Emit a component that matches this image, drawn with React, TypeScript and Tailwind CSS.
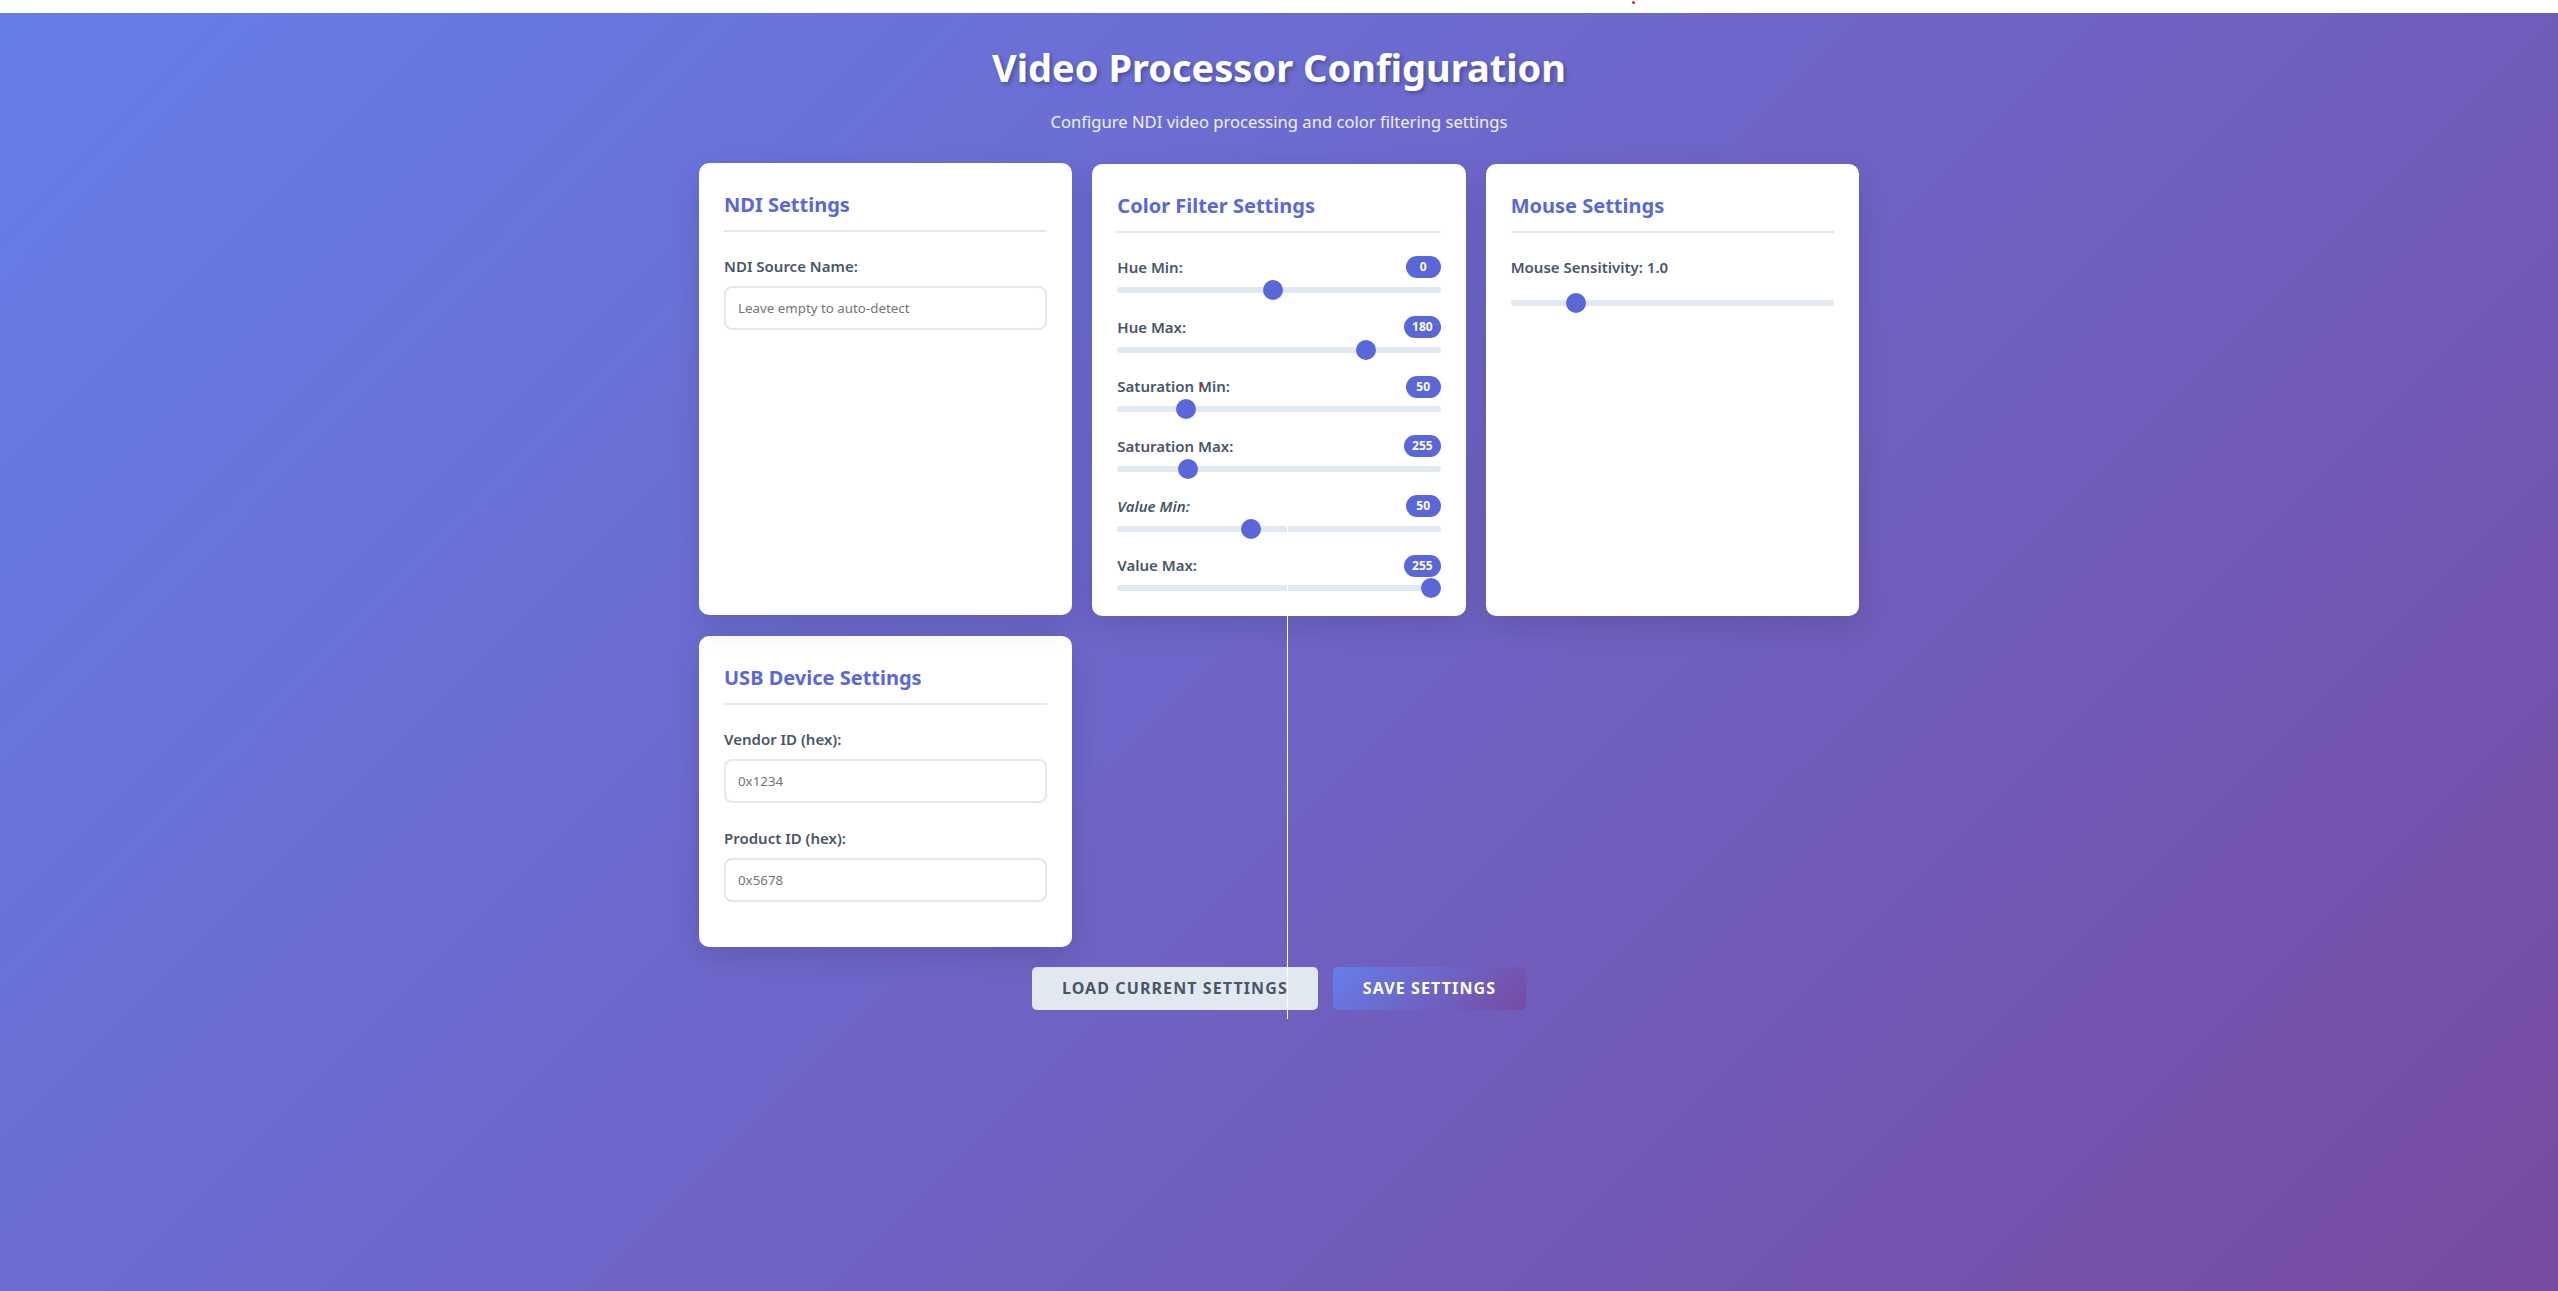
import React from "react";

type Row = { label: string; value: string; pos: number; italic?: boolean };

const rows: Row[] = [
  { label: "Hue Min:", value: "0", pos: 0.481 },
  { label: "Hue Max:", value: "180", pos: 0.788 },
  { label: "Saturation Min:", value: "50", pos: 0.194 },
  { label: "Saturation Max:", value: "255", pos: 0.201 },
  { label: "Value Min:", value: "50", pos: 0.408, italic: true },
  { label: "Value Max:", value: "255", pos: 1 },
];

function Track({ pos }: { pos: number }) {
  return (
    <div className="relative h-[6px] w-full rounded-full bg-[#e2e8f0]">
      <div
        className="absolute top-[-7px] h-5 w-5 rounded-full bg-[#5a67d8]"
        style={{ left: `calc((100% - 20px) * ${pos})` }}
      />
    </div>
  );
}

function Card({
  title,
  children,
  className = "",
}: {
  title: string;
  children?: React.ReactNode;
  className?: string;
}) {
  return (
    <div
      className={`rounded-[10px] bg-white px-[25px] pt-[27px] pb-[25px] shadow-[0_10px_30px_rgba(0,0,0,0.12)] ${className}`}
    >
      <h2 className="border-b-2 border-[#e2e8f0] pb-[10px] text-[20px] font-bold leading-[30px] text-[#5a67d8]">
        {title}
      </h2>
      <div className="pt-[23px]">{children}</div>
    </div>
  );
}

const labelCls =
  "block text-[15px] font-semibold leading-[22.5px] text-[#4a5568]";
const inputCls =
  "block h-[44px] w-full rounded-lg border-2 border-[#e2e8f0] bg-white px-[12px] text-[13.33px] text-[#2d3748] outline-none placeholder:text-[#757575]";

export default function App() {
  return (
    <div className="relative flex min-h-screen w-full flex-col font-['Noto_Sans',sans-serif]">
      <div className="h-[13px] w-full bg-white" />
      <div className="flex-1 bg-[linear-gradient(135deg,#667eea_0%,#764ba2_100%)] pb-10">
        <h1 className="pt-[31px] text-center text-[38px] font-bold leading-[46px] text-white [text-shadow:2px_2px_4px_rgba(0,0,0,0.3)]">
          Video Processor Configuration
        </h1>
        <p className="mt-[19px] text-center text-[16.6px] leading-[25px] text-white/90">
          Configure NDI video processing and color filtering settings
        </p>

        <div className="mx-auto mt-[30px] grid w-[1160px] grid-cols-3 gap-[20px]">
          <Card title="NDI Settings" className="-translate-y-[1px]">
            <label className={labelCls}>NDI Source Name:</label>
            <input
              className={`${inputCls} mt-[8px]`}
              placeholder="Leave empty to auto-detect"
            />
          </Card>

          <Card title="Color Filter Settings">
            <div className="flex flex-col gap-[22.7px]">
              {rows.map((r) => (
                <div key={r.label} className="flex flex-col">
                  <div className="flex h-[22.5px] items-center justify-between">
                    <span className={`${labelCls} ${r.italic ? "italic" : ""}`}>
                      {r.label}
                    </span>
                    <span className="flex h-[22px] min-w-[35px] items-center justify-center rounded-full bg-[#5a67d8] px-[8px] text-[12px] font-bold text-white">
                      {r.value}
                    </span>
                  </div>
                  <div className="mt-[8.5px]">
                    <Track pos={r.pos} />
                  </div>
                </div>
              ))}
            </div>
          </Card>

          <Card title="Mouse Settings">
            <label className={labelCls}>Mouse Sensitivity: 1.0</label>
            <div className="mt-[21.5px]">
              <Track pos={0.1815} />
            </div>
          </Card>

          <Card title="USB Device Settings">
            <div>
              <label className={labelCls}>Vendor ID (hex):</label>
              <input className={`${inputCls} mt-[8px]`} placeholder="0x1234" />
            </div>
            <div className="mt-[24.5px] mb-[20px]">
              <label className={labelCls}>Product ID (hex):</label>
              <input className={`${inputCls} mt-[8px]`} placeholder="0x5678" />
            </div>
          </Card>
        </div>

        <div className="mt-[20px] flex justify-center gap-[15px]">
          <button className="h-[43px] rounded-[5px] bg-[#e2e8f0] px-[30px] text-[16px] font-bold uppercase tracking-[1.1px] text-[#4a5568]">
            Load Current Settings
          </button>
          <button className="h-[43px] rounded-[5px] bg-[linear-gradient(135deg,#667eea_0%,#764ba2_100%)] px-[30px] text-[16px] font-bold uppercase tracking-[1.1px] text-white">
            Save Settings
          </button>
        </div>
      </div>

      <div className="pointer-events-none absolute left-[1287px] top-[506px] h-[513px] w-px bg-white" />
      <div className="pointer-events-none absolute left-[1632px] top-[1px] h-[3px] w-[3px] rounded-full bg-[#e02020]" />
      <div className="pointer-events-none absolute left-[1200px] top-[384px] h-[3px] w-[2px] bg-[#e02020]" />
    </div>
  );
}
